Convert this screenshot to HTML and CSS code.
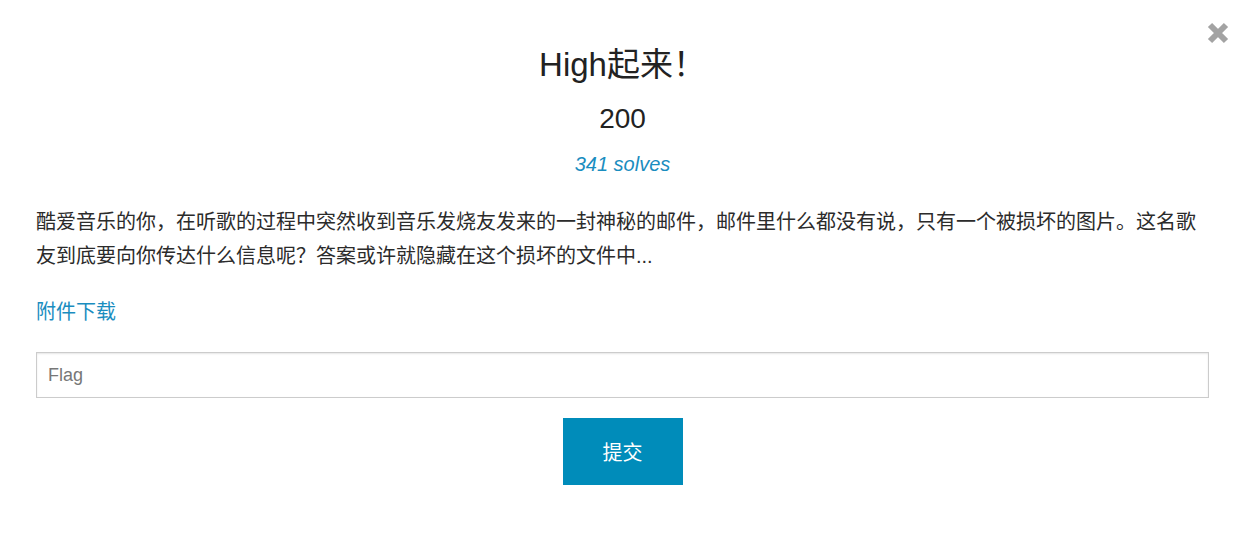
FILE: index.html
```html
<!DOCTYPE html>
<html lang="zh-CN">
<head>
<meta charset="utf-8">
<title>High起来！</title>
<link rel="stylesheet" href="styles.css">
</head>
<body>
<div class="modal">
  <button class="close" aria-label="Close">
    <svg width="22" height="22" viewBox="0 0 22 22"><path d="M3 3 L19 19 M19 3 L3 19" stroke="#a3a3a3" stroke-width="6" stroke-linecap="butt"/></svg>
  </button>
  <h3 class="name">High起来！</h3>
  <h4 class="value">200</h4>
  <p class="solves">341 solves</p>
  <p class="desc">酷爱音乐的你，在听歌的过程中突然收到音乐发烧友发来的一封神秘的邮件，邮件里什么都没有说，只有一个被损坏的图片。这名歌友到底要向你传达什么信息呢？答案或许就隐藏在这个损坏的文件中...</p>
  <a class="file" href="#">附件下载</a>
  <input class="flag" type="text" placeholder="Flag">
  <div class="actions"><button class="submit">提交</button></div>
</div>
</body>
</html>
```

FILE: styles.css
```css
* { box-sizing: border-box; }
html, body { margin: 0; padding: 0; background: #fff; }
body {
  font-family: "Liberation Sans", "Noto Sans CJK SC", sans-serif;
  color: #2b2b2b;
}
.modal {
  position: relative;
  width: 1237px;
  height: 538px;
  padding: 46px 28px 0 36px;
  display: flex;
  flex-direction: column;
}
.close {
  position: absolute;
  top: 22px;
  right: 8px;
  width: 22px;
  height: 22px;
  padding: 0;
  border: 0;
  background: none;
  line-height: 0;
}
.name {
  margin: 0;
  font-size: 33px;
  line-height: 38px;
  font-weight: 400;
  text-align: center;
  color: #222;
}
.value {
  margin: 18px 0 0;
  font-size: 28px;
  line-height: 34px;
  font-weight: 400;
  text-align: center;
  color: #222;
}
.solves {
  margin: 14px 0 0;
  font-size: 20px;
  line-height: 28px;
  font-style: italic;
  text-align: center;
  color: #1a8dbf;
}
.desc {
  margin: 27px 0 0;
  font-size: 20px;
  line-height: 34px;
  color: #2b2b2b;
}
.file {
  margin-top: 24px;
  align-self: flex-start;
  font-size: 20px;
  line-height: 30px;
  color: #1a8dbf;
  text-decoration: none;
}
.flag {
  margin-top: 25px;
  width: 100%;
  height: 46px;
  border: 1px solid #cccccc;
  box-shadow: inset 0 1px 2px rgba(0,0,0,0.1);
  padding: 0 11px;
  font-family: "Liberation Sans", "Noto Sans CJK SC", sans-serif;
  font-size: 18px;
  color: #333;
  outline: none;
}
.flag::placeholder { color: #777; }
.actions {
  margin-top: 20px;
  display: flex;
  justify-content: center;
}
.submit {
  width: 120px;
  height: 67px;
  border: 0;
  background: #008cba;
  color: #fff;
  font-family: "Liberation Sans", "Noto Sans CJK SC", sans-serif;
  font-size: 20px;
}
```
